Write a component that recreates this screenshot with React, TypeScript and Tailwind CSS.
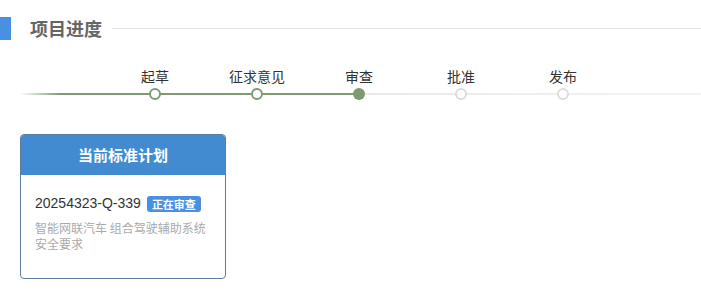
const steps = ['起草', '征求意见', '审查', '批准', '发布'];
const current = 2;

export default function App() {
  return (
    <div
      className="w-[701px] h-[300px] bg-white relative overflow-hidden"
      style={{ fontFamily: '"Microsoft YaHei", "Noto Sans CJK SC", "Liberation Sans", sans-serif' }}
    >
      {/* section title */}
      <div className="flex items-center h-[24px] mt-[16px]">
        <div className="w-[11px] h-[23px] bg-[#4a90e2]" />
        <div className="ml-[19px] text-[18px] font-bold text-[#666] leading-none">项目进度</div>
        <div className="flex-1 ml-[10px] h-px bg-[#e4e4e4]" />
      </div>

      {/* progress */}
      <div className="relative mt-[27px] h-[36px]">
        <div className="absolute left-[20px] right-0 top-[26px] h-[2px] bg-gradient-to-r from-white via-[#e0e0e0] via-5% to-[#f4f4f4]" />
        <div className="absolute left-[20px] w-[339px] top-[26px] h-[2px] bg-gradient-to-r from-white via-[#7f9a73] via-12% to-[#7f9a73]" />
        <div className="absolute left-[104px] top-0 flex">
          {steps.map((s, i) => (
            <div key={s} className="w-[102px] flex flex-col items-center">
              <div className="text-[14px] leading-[18px] text-[#333]">{s}</div>
              <div
                className={
                  i < current
                    ? 'mt-[3px] w-[12px] h-[12px] rounded-full border-2 border-[#7f9a73] bg-white'
                    : i === current
                    ? 'mt-[3px] w-[12px] h-[12px] rounded-full bg-[#7f9a73]'
                    : 'mt-[3px] w-[12px] h-[12px] rounded-full border-2 border-[#dcdcdc] bg-white'
                }
              />
            </div>
          ))}
        </div>
      </div>

      {/* current plan card */}
      <div className="ml-[20px] mt-[31px] w-[206px] h-[145px] rounded-[4px] border border-[#5d7d9f] overflow-hidden flex flex-col">
        <div className="h-[40px] bg-[#428bd0] flex items-center justify-center text-white text-[15px] font-bold">
          当前标准计划
        </div>
        <div className="px-[14px] pt-[18px]">
          <div className="flex items-center">
            <span className="text-[14px] text-[#333]" style={{ fontFamily: '"Liberation Sans", "Noto Sans CJK SC", sans-serif' }}>
              20254323-Q-339
            </span>
            <span className="ml-[6px] px-[5px] h-[16px] leading-[16px] rounded-[3px] bg-[#4a90e2] text-white text-[11px] font-bold">
              正在审查
            </span>
          </div>
          <div className="mt-[6px] text-[12px] leading-[16px] text-[#aaa]">
            智能网联汽车 组合驾驶辅助系统安全要求
          </div>
        </div>
      </div>
    </div>
  );
}
